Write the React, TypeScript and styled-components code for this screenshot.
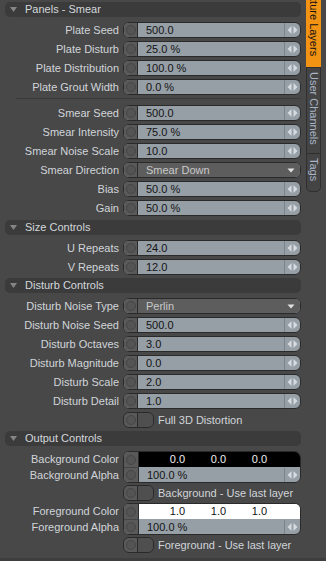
import React from "react";
import styled, { createGlobalStyle } from "styled-components";

type Item =
  | { kind: "num"; label: string; value: string }
  | { kind: "select"; label: string; value: string }
  | { kind: "toggle"; label: string }
  | { kind: "color"; label: string; alphaLabel: string; values: string[]; light?: boolean; alpha: string }
  | { kind: "sep" };

type SectionData = { title: string; gap: number; padBottom?: number; items: Item[] };

const sections: SectionData[] = [
  {
    title: "Panels - Smear",
    gap: 3,
    padBottom: 1,
    items: [
      { kind: "num", label: "Plate Seed", value: "500.0" },
      { kind: "num", label: "Plate Disturb", value: "25.0 %" },
      { kind: "num", label: "Plate Distribution", value: "100.0 %" },
      { kind: "num", label: "Plate Grout Width", value: "0.0 %" },
      { kind: "sep" },
      { kind: "num", label: "Smear Seed", value: "500.0" },
      { kind: "num", label: "Smear Intensity", value: "75.0 %" },
      { kind: "num", label: "Smear Noise Scale", value: "10.0" },
      { kind: "select", label: "Smear Direction", value: "Smear Down" },
      { kind: "num", label: "Bias", value: "50.0 %" },
      { kind: "num", label: "Gain", value: "50.0 %" },
    ],
  },
  {
    title: "Size Controls",
    gap: 3,
    items: [
      { kind: "num", label: "U Repeats", value: "24.0" },
      { kind: "num", label: "V Repeats", value: "12.0" },
    ],
  },
  {
    title: "Disturb Controls",
    gap: 3,
    items: [
      { kind: "select", label: "Disturb Noise Type", value: "Perlin" },
      { kind: "num", label: "Disturb Noise Seed", value: "500.0" },
      { kind: "num", label: "Disturb Octaves", value: "3.0" },
      { kind: "num", label: "Disturb Magnitude", value: "0.0" },
      { kind: "num", label: "Disturb Scale", value: "2.0" },
      { kind: "num", label: "Disturb Detail", value: "1.0" },
      { kind: "toggle", label: "Full 3D Distortion" },
    ],
  },
  {
    title: "Output Controls",
    gap: 2,
    items: [
      {
        kind: "color",
        label: "Background Color",
        alphaLabel: "Background Alpha",
        values: ["0.0", "0.0", "0.0"],
        alpha: "100.0 %",
      },
      { kind: "toggle", label: "Background - Use last layer" },
      {
        kind: "color",
        label: "Foreground Color",
        alphaLabel: "Foreground Alpha",
        values: ["1.0", "1.0", "1.0"],
        light: true,
        alpha: "100.0 %",
      },
      { kind: "toggle", label: "Foreground - Use last layer" },
    ],
  },
];

const Spinner = () => (
  <SpinBox>
    <svg width="15" height="14" viewBox="0 0 15 14">
      <polygon points="2.5,7 6.5,3 6.5,11" fill="#d5dbe0" />
      <polygon points="8.5,3 12.5,7 8.5,11" fill="#d5dbe0" />
    </svg>
  </SpinBox>
);

const renderItem = (item: Item, i: number) => {
  switch (item.kind) {
    case "sep":
      return <Divider key={i} />;
    case "num":
      return (
        <Row key={i}>
          <Label>{item.label}</Label>
          <Control>
            <Knob />
            <Value>{item.value}</Value>
            <Spinner />
          </Control>
        </Row>
      );
    case "select":
      return (
        <Row key={i}>
          <Label>{item.label}</Label>
          <Control>
            <Knob />
            <Select>
              <span>{item.value}</span>
              <svg width="8" height="5" viewBox="0 0 8 5">
                <polygon points="0.5,0.5 7.5,0.5 4,4.5" fill="#e2e2e2" />
              </svg>
            </Select>
          </Control>
        </Row>
      );
    case "toggle":
      return (
        <Row key={i}>
          <span />
          <ToggleWrap>
            <Toggle>
              <Knob />
              <ToggleEnd />
            </Toggle>
            <ToggleLabel>{item.label}</ToggleLabel>
          </ToggleWrap>
        </Row>
      );
    case "color":
      return (
        <Row key={i} $tall>
          <LabelStack>
            <Label>{item.label}</Label>
            <Label>{item.alphaLabel}</Label>
          </LabelStack>
          <Control $tall>
            <KnobStack>
              <Knob $flat />
              <Knob $flat $top />
            </KnobStack>
            <ColorStack>
              <Swatch $light={item.light}>
                {item.values.map((v, j) => (
                  <SwatchCell key={j}>{v}</SwatchCell>
                ))}
              </Swatch>
              <AlphaRow>
                <Value>{item.alpha}</Value>
                <Spinner />
              </AlphaRow>
            </ColorStack>
          </Control>
        </Row>
      );
  }
};

const App = () => {
  return (
    <Page>
      <GlobalStyle />
      <Main>
        {sections.map((s) => (
          <Section key={s.title}>
            <Header>
              <svg width="7" height="5" viewBox="0 0 7 5">
                <polygon points="0,0 7,0 3.5,5" fill="#858585" />
              </svg>
              <span>{s.title}</span>
            </Header>
            <Body $gap={s.gap} $pb={s.padBottom || 0}>
              {s.items.map(renderItem)}
            </Body>
          </Section>
        ))}
      </Main>
      <TabStrip>
        <Tab $active $h={68}>
          <TabText>Texture Layers</TabText>
        </Tab>
        <Tab $h={87}>
          <TabText>User Channels</TabText>
        </Tab>
        <Tab $h={39} $last>
          <TabText>Tags</TabText>
        </Tab>
      </TabStrip>
    </Page>
  );
};

export default App;

const GlobalStyle = createGlobalStyle`
  html, body {
    margin: 0;
    padding: 0;
    background: #484848;
  }
  body {
    font-family: "Liberation Sans", Arial, sans-serif;
    font-size: 11px;
  }
`;

const Page = styled.div`
  display: flex;
  width: 326px;
  height: 561px;
  box-sizing: border-box;
  background: #484848;
  border-bottom: 3px solid #3e3e3e;
  overflow: hidden;
`;

const Main = styled.div`
  width: 303px;
  flex: none;
  box-sizing: border-box;
  padding: 2px 2px 0 5px;
  display: flex;
  flex-direction: column;
  gap: 3px;
`;

const Section = styled.div`
  display: flex;
  flex-direction: column;
`;

const Header = styled.div`
  height: 15px;
  display: flex;
  align-items: center;
  gap: 8px;
  padding-left: 5px;
  margin-bottom: 5px;
  background: #3b3b3b;
  border-radius: 5px;
  color: #d3d7dc;
  line-height: 15px;
`;

const Body = styled.div<{ $gap: number; $pb: number }>`
  display: flex;
  flex-direction: column;
  gap: ${(p) => p.$gap}px;
  padding-bottom: ${(p) => p.$pb}px;
`;

const Divider = styled.div`
  height: 1px;
  margin: 0 0 3px 11px;
  background: #3a3a3a;
`;

const Row = styled.div<{ $tall?: boolean }>`
  display: grid;
  grid-template-columns: 114px 178px;
  column-gap: 4px;
  height: ${(p) => (p.$tall ? 32 : 16)}px;
`;

const Label = styled.div`
  text-align: right;
  color: #d1d5da;
  line-height: 16px;
  white-space: nowrap;
`;

const LabelStack = styled.div`
  display: flex;
  flex-direction: column;
`;

const Control = styled.div<{ $tall?: boolean }>`
  display: flex;
  height: ${(p) => (p.$tall ? 32 : 16)}px;
  box-sizing: border-box;
  border: 1px solid #2a2a2a;
  border-radius: 6px;
  overflow: hidden;
  background: #969ea6;
`;

const Knob = styled.div<{ $flat?: boolean; $top?: boolean }>`
  width: 14px;
  height: ${(p) => (p.$flat ? "15px" : "auto")};
  flex: none;
  box-sizing: border-box;
  background: #595959;
  border-right: 1px solid #2a2a2a;
  border-top: ${(p) => (p.$top ? "1px solid #444" : "none")};
  display: flex;
  align-items: center;
  justify-content: center;

  &::before {
    content: "";
    width: 10px;
    height: 10px;
    box-sizing: border-box;
    border-radius: 50%;
    border: 1px solid #464646;
    background: #545454;
  }
`;

const KnobStack = styled.div`
  display: flex;
  flex-direction: column;
  width: 15px;
  flex: none;

  & > div {
    width: 15px;
  }
`;

const Value = styled.div`
  flex: 1;
  padding-left: 8px;
  color: #141414;
  line-height: 14px;
  white-space: nowrap;
`;

const SpinBox = styled.div`
  width: 15px;
  flex: none;
  border-left: 1px solid #7c848b;
  display: flex;
  align-items: center;
  justify-content: center;
`;

const Select = styled.div`
  flex: 1;
  display: flex;
  align-items: center;
  justify-content: space-between;
  padding: 0 5px 0 8px;
  background: #5d5d5d;
  color: #c9c9c9;
  line-height: 14px;
`;

const ToggleWrap = styled.div`
  display: flex;
  align-items: center;
  gap: 4px;
`;

const Toggle = styled.div`
  display: flex;
  width: 31px;
  height: 16px;
  box-sizing: border-box;
  border: 1px solid #2a2a2a;
  border-radius: 6px;
  overflow: hidden;
  flex: none;
`;

const ToggleEnd = styled.div`
  flex: 1;
  background: #4f4f4f;
`;

const ToggleLabel = styled.span`
  color: #d1d5da;
  line-height: 16px;
  white-space: nowrap;
`;

const ColorStack = styled.div`
  flex: 1;
  display: flex;
  flex-direction: column;
`;

const Swatch = styled.div<{ $light?: boolean }>`
  height: 15px;
  display: grid;
  grid-template-columns: repeat(3, 41px);
  padding-left: 18px;
  background: ${(p) => (p.$light ? "#ffffff" : "#000000")};
  color: ${(p) => (p.$light ? "#111111" : "#f0f0f0")};
  line-height: 15px;
`;

const SwatchCell = styled.span`
  text-align: center;
`;

const AlphaRow = styled.div`
  flex: 1;
  display: flex;
  align-items: center;
`;

const TabStrip = styled.div`
  width: 15px;
  margin-left: 3px;
  display: flex;
  flex-direction: column;
  flex: none;
`;

const Tab = styled.div<{ $active?: boolean; $h: number; $last?: boolean }>`
  height: ${(p) => p.$h}px;
  box-sizing: border-box;
  display: flex;
  flex-direction: column;
  align-items: center;
  justify-content: ${(p) => (p.$active ? "flex-end" : "flex-start")};
  padding: ${(p) => (p.$active ? "0 0 12px" : "4px 0 0")};
  overflow: hidden;
  background: ${(p) => (p.$active ? "#f39314" : "#444444")};
  color: ${(p) => (p.$active ? "#111111" : "#a9b5c7")};
  border: ${(p) => (p.$active ? "none" : "1px solid #2f2f2f")};
  border-top: ${(p) => (p.$active ? "none" : "1px solid #2f2f2f")};
  border-radius: ${(p) => (p.$last ? "0 0 5px 5px" : "0")};
  margin-top: ${(p) => (p.$active ? "0" : "-1px")};
`;

const TabText = styled.span`
  writing-mode: vertical-rl;
  white-space: nowrap;
  line-height: 14px;
  flex: none;
`;
